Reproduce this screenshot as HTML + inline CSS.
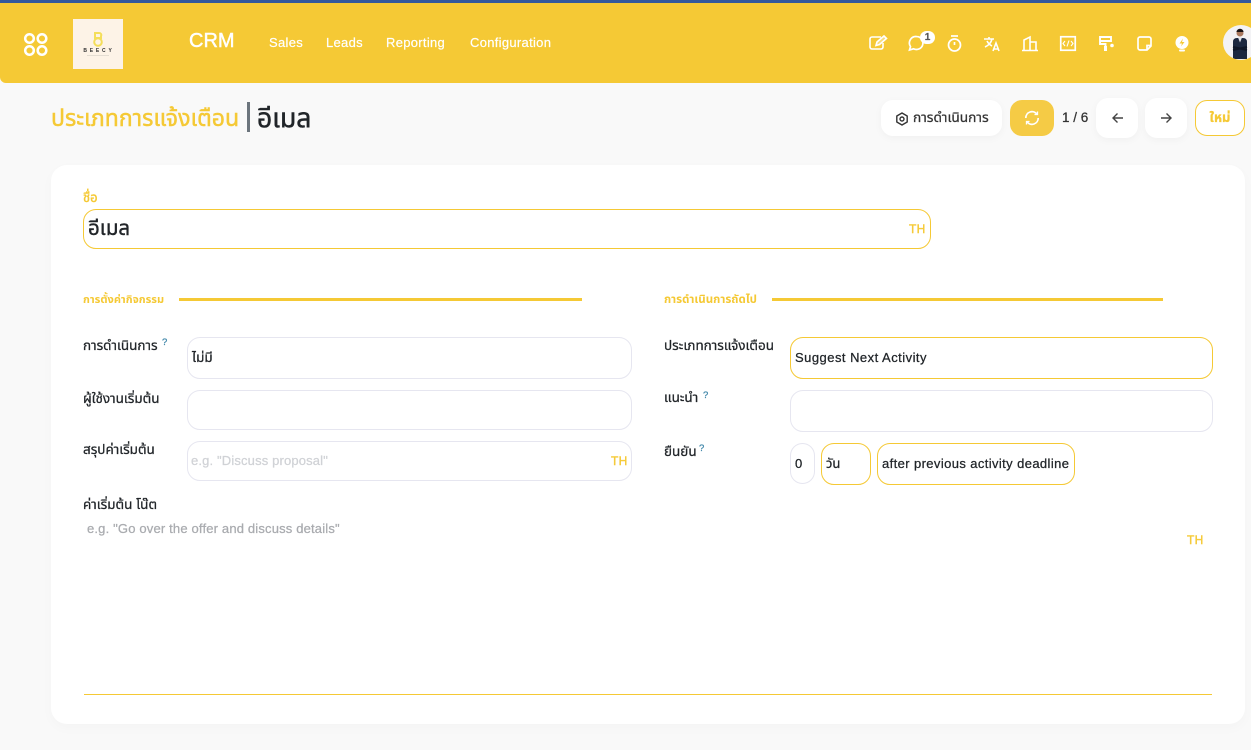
<!DOCTYPE html>
<html lang="th"><head><meta charset="utf-8"><title>อีเมล</title>
<style>
*{box-sizing:border-box}
html,body{margin:0;padding:0;width:1251px;height:750px;overflow:hidden;background:#f9f9f9;font-family:"Liberation Sans","Noto Sans Thai","Noto Sans CJK SC",sans-serif;color:#212529;-webkit-text-stroke:.25px}
.a{position:absolute;white-space:nowrap}
.nav{color:#fff;font-size:13px;letter-spacing:.3px;top:35px;line-height:16px;-webkit-text-stroke:.2px}
.f{position:absolute;border:1px solid #e6e6f0;border-radius:13px;background:#fff}
.y{border-color:#f5c935}
.l{font-size:13.5px;line-height:18px;color:#212529}
.q{font-size:9.5px;color:#3d85a8;line-height:10px}
.t{font-size:13px;line-height:16px;color:#212529}
.th{color:#f5c935;font-size:12px;line-height:14px;letter-spacing:.3px;-webkit-text-stroke:.4px}
.sec{color:#f5c935;font-weight:bold;line-height:14px;-webkit-text-stroke:0}
.bar{position:absolute;height:3px;background:#f5c935}
.btn{position:absolute;background:#fff;border-radius:12px;box-shadow:0 2px 8px rgba(0,0,0,.04)}
svg{position:absolute;overflow:visible}
</style></head><body>
<div class="a" style="left:0;top:0;width:1251px;height:83px;background:#f5c935;border-bottom-left-radius:6px"></div>
<div class="a" style="left:0;top:0;width:1251px;height:3px;background:#33599c"></div>

<svg style="left:23px;top:32px" width="26" height="26" fill="none" stroke="#fff" stroke-width="2.500"><circle cx="6.500" cy="6.500" r="4.300"/><circle cx="19" cy="6.500" r="4.300"/><circle cx="6.500" cy="18.500" r="4.300"/><circle cx="19" cy="18.500" r="4.300"/></svg>
<div class="a" style="left:73px;top:19px;width:50px;height:50px;background:#fdf3e7"></div>
<svg style="left:93px;top:32px" width="10" height="15" fill="none" stroke="#f4de5a" stroke-width="2"><path d="M2 1h4a2 2 0 0 1 2 3v2H2z"/><circle cx="5" cy="10" r="3.800"/></svg>
<div class="a" style="left:83px;top:48px;width:32px;text-align:center;font-size:5px;font-weight:bold;letter-spacing:2.800px;color:#333;line-height:6px;-webkit-text-stroke:0">BEECY</div>
<div class="a" style="left:87px;top:55px;width:22px;height:1px;background:#e4ddd2"></div>

<div class="a" style="left:189px;top:30px;font-size:20px;line-height:23px;color:#fff;-webkit-text-stroke:.45px">CRM</div>
<div class="a nav" style="left:269px">Sales</div>
<div class="a nav" style="left:326px">Leads</div>
<div class="a nav" style="left:386px">Reporting</div>
<div class="a nav" style="left:470px">Configuration</div>

<!-- top icons -->
<svg style="left:869px;top:35px" width="19" height="16" fill="none" stroke="#fff" stroke-width="1.600"><path d="M12 2H3a2 2 0 0 0-2 2v8a2 2 0 0 0 2 2h9a2 2 0 0 0 2-2V8"/><path d="M7 10.500l1-3.500 7-6 2.500 2.500-7 6z" fill="#fff" fill-opacity=".35"/></svg>
<svg style="left:908px;top:35px" width="17" height="17" fill="none" stroke="#fff" stroke-width="1.700"><path d="M8.500 1.500a6.500 6.500 0 1 1-3 12.300L1.500 15l1-3.400A6.500 6.500 0 0 1 8.500 1.500z"/></svg>
<div class="a" style="left:920px;top:31px;width:15px;height:13px;border-radius:7px;background:#fff;color:#555;font-size:10px;font-weight:bold;text-align:center;line-height:13px">1</div>
<svg style="left:947px;top:35px" width="15" height="17" fill="none" stroke="#fff" stroke-width="1.700"><path d="M4 1h7"/><circle cx="7.500" cy="10" r="6"/><path d="M7.500 10V7"/></svg>
<svg style="left:984px;top:36px" width="17" height="16" fill="none" stroke="#fff" stroke-width="1.600"><path d="M0 3h10M5 1v2M8 3c-1 4-3 6-7 8M3 5c1 2 3 4 5 5"/><path d="M9 15l3-8 3 8M10 13h4"/></svg>
<svg style="left:1022px;top:36px" width="17" height="15" fill="none" stroke="#fff" stroke-width="1.600"><path d="M0 14.500h16M2 14V4l6-3v13M8 6h6v8"/></svg>
<svg style="left:1060px;top:36px" width="16" height="15" fill="none" stroke="#fff" stroke-width="1.700"><rect x=".75" y=".75" width="14.500" height="13.500"/><path d="M5 5L3 7.500l2 2.500M11 5l2 2.500-2 2.500M9 4.500l-2 6" stroke-width="1.100"/></svg>
<svg style="left:1099px;top:36px" width="16" height="16" fill="none" stroke="#fff" stroke-width="1.900"><path d="M1 1h11v4H1zM1 5v3h5.500v2"/><rect x="5" y="10" width="3" height="5" fill="#fff" stroke="none"/><circle cx="13" cy="9.500" r="1.800" fill="#fff" stroke="none"/></svg>
<svg style="left:1137px;top:36px" width="15" height="15" fill="none" stroke="#fff" stroke-width="1.700"><path d="M3 1h9a2 2 0 0 1 2 2v7l-4 4H3a2 2 0 0 1-2-2V3a2 2 0 0 1 2-2zM14 9.500h-4v4.500"/></svg>
<svg style="left:1175px;top:36px" width="14" height="16"><circle cx="7" cy="6.500" r="6.500" fill="#fff"/><rect x="4" y="13.500" width="6" height="2" rx="1" fill="#fff"/><path d="M8 2.500L4.500 7.500H7L6 10.500 9.500 6H7z" fill="#f5c935"/></svg>

<div class="a" style="left:1223px;top:25px;width:36px;height:35px;border-radius:50%;background:#f3f3f5;overflow:hidden">
<svg style="left:9px;top:0" width="20" height="36"><circle cx="8" cy="8" r="3.500" fill="#a9795f"/><path d="M4.500 7a3.500 3.200 0 0 1 7 0z" fill="#1a1414"/><path d="M1 34V17q0-4 4-4h6q4 0 4 4v17z" fill="#1b2840"/><path d="M6 12.500l2 5 2-5z" fill="#dfe3ea"/><path d="M1 22l14 3M1 25l14-3" stroke="#0e1728" stroke-width="2"/></svg>
</div>

<!-- breadcrumb -->
<div class="a" style="left:51px;top:103px;font-size:23.100px;line-height:31px;color:#f5c935;-webkit-text-stroke:.45px">ประเภทการแจ้งเตือน</div>
<div class="a" style="left:247px;top:102px;width:2.500px;height:30px;background:#6c757d"></div>
<div class="a" style="left:257px;top:103px;font-size:26.500px;line-height:31px;color:#212529;-webkit-text-stroke:.5px">อีเมล</div>

<!-- toolbar -->
<div class="btn" style="left:881px;top:100px;width:121px;height:36px"></div>
<svg style="left:895px;top:112px" width="14" height="14" fill="none" stroke="#333" stroke-width="1.400"><path d="M7 1l5.200 3v6L7 13l-5.200-3V4z" stroke-linejoin="round"/><circle cx="7" cy="7" r="2"/></svg>
<div class="a" style="left:913px;top:110px;font-size:13.700px;line-height:16px;color:#333">การดำเนินการ</div>
<div class="a" style="left:1010px;top:100px;width:44px;height:36px;border-radius:12px;background:#f5cb45"></div>
<svg style="left:1024px;top:110px" width="16" height="16" fill="none" stroke="#fff" stroke-width="1.700"><path d="M1.800 8A6.200 6.200 0 0 1 13 4.200M14.200 8A6.200 6.200 0 0 1 3 11.800"/><path d="M13.500 1.500v3h-3M2.500 14.500v-3h3" stroke-width="1.300"/></svg>
<div class="a" style="left:1062px;top:109px;font-size:13.500px;line-height:17px;color:#333">1 / 6</div>
<div class="btn" style="left:1096px;top:98px;width:42px;height:40px"></div>
<svg style="left:1112px;top:112px" width="12" height="12" fill="none" stroke="#444" stroke-width="1.400"><path d="M11 6H1M5.500 1.500L1 6l4.500 4.500"/></svg>
<div class="btn" style="left:1145px;top:98px;width:42px;height:40px"></div>
<svg style="left:1160px;top:112px" width="12" height="12" fill="none" stroke="#444" stroke-width="1.400"><path d="M1 6h10M6.500 1.500L11 6l-4.500 4.500"/></svg>
<div class="a" style="left:1195px;top:100px;width:50px;height:36px;border:1px solid #f5c935;border-radius:12px;background:#fff;color:#f5c935;font-size:13px;font-weight:bold;text-align:center;line-height:34px">ใหม่</div>

<!-- card -->
<div class="a" style="left:51px;top:165px;width:1194px;height:559px;background:#fff;border-radius:16px;box-shadow:0 4px 12px rgba(0,0,0,.025)"></div>

<div class="a" style="left:83px;top:189px;font-size:13px;line-height:18px;color:#f5c935;-webkit-text-stroke:.4px">ชื่อ</div>
<div class="f y" style="left:83px;top:209px;width:848px;height:40px"></div>
<div class="a" style="left:88px;top:216px;font-size:20.500px;line-height:26px;color:#212529;-webkit-text-stroke:.4px">อีเมล</div>
<div class="a th" style="left:909px;top:222px">TH</div>

<div class="a sec" style="left:83px;top:293px;font-size:11px">การตั้งค่ากิจกรรม</div>
<div class="bar" style="left:179px;top:298px;width:403px"></div>
<div class="a sec" style="left:664px;top:293px;font-size:11.500px">การดำเนินการถัดไป</div>
<div class="bar" style="left:772px;top:298px;width:391px"></div>

<!-- left -->
<div class="a l" style="left:83px;top:337px">การดำเนินการ</div><div class="a q" style="left:162px;top:338px">?</div>
<div class="f" style="left:187px;top:337px;width:445px;height:42px"></div>
<div class="a t" style="left:192px;top:350px;font-size:13.500px">ไม่มี</div>
<div class="a l" style="left:83px;top:390px">ผู้ใช้งานเริ่มต้น</div>
<div class="f" style="left:187px;top:390px;width:445px;height:40px"></div>
<div class="a l" style="left:83px;top:441px">สรุปค่าเริ่มต้น</div>
<div class="f" style="left:187px;top:441px;width:445px;height:40px"></div>
<div class="a t" style="left:191px;top:453px;color:#d0d2d6;letter-spacing:.15px">e.g. "Discuss proposal"</div>
<div class="a th" style="left:611px;top:454px">TH</div>
<div class="a l" style="left:83px;top:496px">ค่าเริ่มต้น โน๊ต</div>
<div class="a t" style="left:87px;top:521px;color:#a9abaf;letter-spacing:.17px">e.g. "Go over the offer and discuss details"</div>
<div class="a th" style="left:1187px;top:533px">TH</div>

<!-- right -->
<div class="a l" style="left:664px;top:337px">ประเภทการแจ้งเตือน</div>
<div class="f y" style="left:790px;top:337px;width:423px;height:42px"></div>
<div class="a t" style="left:795px;top:350px;letter-spacing:.47px">Suggest Next Activity</div>
<div class="a l" style="left:664px;top:389px">แนะนำ</div><div class="a q" style="left:703px;top:391px">?</div>
<div class="f" style="left:790px;top:390px;width:423px;height:42px"></div>
<div class="a l" style="left:664px;top:443px">ยืนยัน</div><div class="a q" style="left:699px;top:444px">?</div>
<div class="f" style="left:790px;top:443px;width:25px;height:41px"></div>
<div class="a t" style="left:795px;top:456px">0</div>
<div class="f y" style="left:821px;top:443px;width:50px;height:42px"></div>
<div class="a t" style="left:826px;top:456px">วัน</div>
<div class="f y" style="left:877px;top:443px;width:198px;height:42px"></div>
<div class="a t" style="left:882px;top:456px;letter-spacing:.39px">after previous activity deadline</div>

<div class="a" style="left:84px;top:694px;width:1128px;height:1px;background:#f5c935"></div>
</body></html>
